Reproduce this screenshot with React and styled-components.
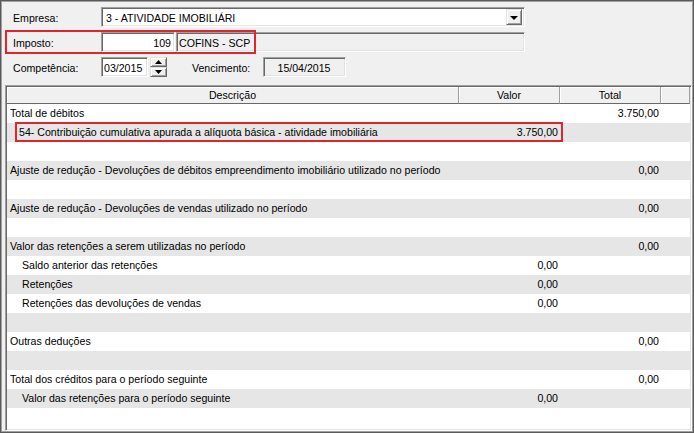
import React from "react";
import styled, { createGlobalStyle } from "styled-components";

/* GLOBAL */
const GlobalStyle = createGlobalStyle`
  html, body {
    margin: 0;
    padding: 0;
    background: #f0f0f0;
  }
  body {
    font-family: "Liberation Sans", Arial, sans-serif;
    font-size: 10.6px;
    color: #000;
  }
`;

// linhas da apuração
const rows = [
  { desc: "Total de débitos", total: "3.750,00" },
  { desc: "54- Contribuição cumulativa apurada a alíquota básica - atividade imobiliária", valor: "3.750,00", indent: 12, mark: true },
  {},
  { desc: "Ajuste de redução - Devoluções de débitos empreendimento imobiliário utilizado no período", total: "0,00" },
  {},
  { desc: "Ajuste de redução - Devoluções de vendas utilizado no período", total: "0,00" },
  {},
  { desc: "Valor das retenções a serem utilizadas no período", total: "0,00" },
  { desc: "Saldo anterior das retenções", valor: "0,00", indent: 15 },
  { desc: "Retenções", valor: "0,00", indent: 15 },
  { desc: "Retenções das devoluções de vendas", valor: "0,00", indent: 15 },
  {},
  { desc: "Outras deduções", total: "0,00" },
  {},
  { desc: "Total dos créditos para o período seguinte", total: "0,00" },
  { desc: "Valor das retenções para o período seguinte", valor: "0,00", indent: 15 },
  {},
];

const Arrow = ({ up }) => (
  <svg width="7" height="4" viewBox="0 0 7 4">
    <path d={up ? "M3.5 0 L7 4 L0 4 Z" : "M0 0 L7 0 L3.5 4 Z"} fill="#000" />
  </svg>
);

const App = () => {
  return (
    <>
      <GlobalStyle />
      <StWindow>
        <StForm>
          <StRow>
            <StLabel>Empresa:</StLabel>
            <StCombo>
              <StComboText>3 - ATIVIDADE IMOBILIÁRI</StComboText>
              <StDropBtn><StArrowDown /></StDropBtn>
            </StCombo>
          </StRow>
          <StRow>
            <StMark />
            <StLabel>Imposto:</StLabel>
            <StField width={74} align="right">109</StField>
            <StField width={349} readOnly>COFINS - SCP</StField>
          </StRow>
          <StRow>
            <StLabel>Competência:</StLabel>
            <StField width={47}>03/2015</StField>
            <StSpinner>
              <StSpinBtn><Arrow up /></StSpinBtn>
              <StSpinBtn><Arrow /></StSpinBtn>
            </StSpinner>
            <StLabel width={71} gap={25}>Vencimento:</StLabel>
            <StField width={83} align="center" readOnly>15/04/2015</StField>
          </StRow>
        </StForm>

        <StTable>
          <StHeader>
            <StHeadCell>Descrição</StHeadCell>
            <StHeadCell>Valor</StHeadCell>
            <StHeadCell>Total</StHeadCell>
            <StHeadCell />
          </StHeader>
          <StBody>
            {rows.map((r, i) => (
              <StDataRow key={i} odd={i % 2 === 1}>
                {r.mark && <StRowMark />}
                <StCell indent={r.indent || 3}>{r.desc}</StCell>
                <StCell right>{r.valor}</StCell>
                <StCell right>{r.total}</StCell>
                <StCell />
              </StDataRow>
            ))}
          </StBody>
        </StTable>
      </StWindow>
    </>
  );
};

/* STYLED-COMPONENTS */

const StWindow = styled.div`
  box-sizing: border-box;
  width: 694px;
  height: 433px;
  display: flex;
  flex-direction: column;
  padding: 6px 1px 1px 4px;
  background: #f0f0f0;
  border: 1px solid #5a5a5a;
  box-shadow: inset 1px 1px 0 #a0a0a0, inset -1px -1px 0 #a0a0a0;
`;

const StForm = styled.div`
  display: flex;
  flex-direction: column;
  gap: 5px;
  padding-left: 8px;
  margin-bottom: 8px;
`;

const StRow = styled.div`
  position: relative;
  display: flex;
  align-items: center;
  height: 20px;
`;

const StLabel = styled.div`
  width: ${p => p.width || 88}px;
  margin-left: ${p => p.gap || 0}px;
  padding-top: 2px;
`;

const sunken = `
  box-sizing: border-box;
  border-top: 1px solid #a0a0a0;
  border-left: 1px solid #a0a0a0;
  border-right: 1px solid #fff;
  border-bottom: 1px solid #fff;
  box-shadow: inset 1px 1px 0 #696969, inset -1px -1px 0 #e3e3e3;
`;

const StCombo = styled.div`
  ${sunken}
  display: flex;
  align-items: center;
  width: 424px;
  height: 20px;
  padding: 2px;
  background: #fff;
`;

const StComboText = styled.div`
  flex: 1;
  padding-left: 2px;
  padding-top: 1px;
`;

const raised = `
  box-sizing: border-box;
  background: #f0f0f0;
  border-top: 1px solid #e3e3e3;
  border-left: 1px solid #e3e3e3;
  border-right: 1px solid #696969;
  border-bottom: 1px solid #696969;
  box-shadow: inset 1px 1px 0 #fff, inset -1px -1px 0 #a0a0a0;
`;

const StDropBtn = styled.div`
  ${raised}
  display: flex;
  align-items: center;
  justify-content: center;
  width: 16px;
  height: 16px;
`;

const StArrowDown = styled.div`
  width: 0;
  height: 0;
  border-left: 4px solid transparent;
  border-right: 4px solid transparent;
  border-top: 4px solid #000;
  margin-top: 1px;
`;

const StField = styled.div`
  ${sunken}
  display: flex;
  align-items: center;
  justify-content: ${p => (p.align === "right" ? "flex-end" : p.align === "center" ? "center" : "flex-start")};
  width: ${p => p.width}px;
  height: 20px;
  margin-right: 1px;
  padding: 1px 3px 0 2px;
  background: ${p => (p.readOnly ? "#f0f0f0" : "#fff")};
`;

const StSpinner = styled.div`
  display: flex;
  flex-direction: column;
  width: 17px;
  height: 20px;
  margin-left: 1px;
`;

const StSpinBtn = styled.div`
  ${raised}
  flex: 1;
  display: flex;
  align-items: center;
  justify-content: center;
`;

const StMark = styled.div`
  position: absolute;
  left: -8px;
  top: -2px;
  width: 251px;
  height: 24px;
  box-sizing: border-box;
  border: 2px solid #e0262c;
  pointer-events: none;
  z-index: 1;
`;

const StTable = styled.div`
  flex: 1;
  display: flex;
  flex-direction: column;
  box-sizing: border-box;
  background: #fff;
  border-top: 1px solid #a0a0a0;
  border-left: 1px solid #a0a0a0;
  border-right: 1px solid #fff;
  border-bottom: 1px solid #fff;
  box-shadow: inset 1px 1px 0 #696969, inset -1px -1px 0 #e3e3e3;
  padding: 1px;
  overflow: hidden;
`;

const cols = `
  display: grid;
  grid-template-columns: 452px 101px 101px 1fr;
`;

const StHeader = styled.div`
  ${cols}
  height: 17px;
  background: #f0f0f0;
`;

const StHeadCell = styled.div`
  display: flex;
  align-items: center;
  justify-content: center;
  box-sizing: border-box;
  border-right: 1px solid #a0a0a0;
  border-bottom: 1px solid #696969;
  box-shadow: inset 1px 1px 0 #fff;
`;

const StBody = styled.div`
  display: flex;
  flex-direction: column;
`;

const StDataRow = styled.div`
  ${cols}
  position: relative;
  height: 19px;
  background: ${p => (p.odd ? "#e6e6e6" : "#fff")};
`;

const StCell = styled.div`
  display: flex;
  align-items: center;
  justify-content: ${p => (p.right ? "flex-end" : "flex-start")};
  padding-left: ${p => (p.right ? 0 : p.indent || 0)}px;
  padding-right: ${p => (p.right ? 2 : 0)}px;
  padding-bottom: 1px;
  white-space: nowrap;
  overflow: hidden;
`;

const StRowMark = styled.div`
  position: absolute;
  left: 8px;
  top: -1px;
  width: 548px;
  height: 20px;
  box-sizing: border-box;
  border: 2px solid #e0262c;
  pointer-events: none;
`;

export default App;
